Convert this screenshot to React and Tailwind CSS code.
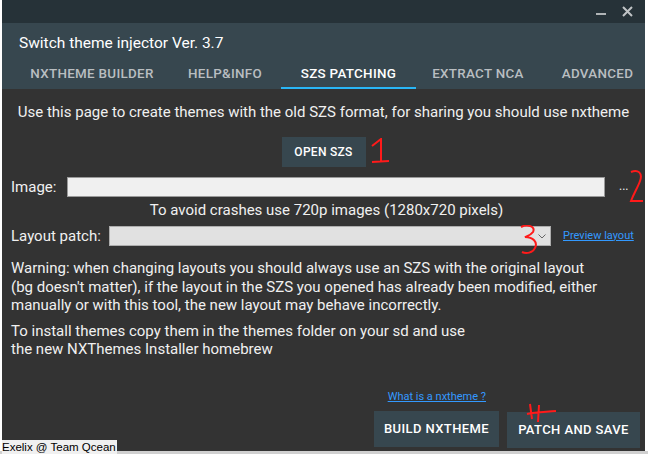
export default function App() {
  const f = { fontFamily: "Roboto, 'Liberation Sans', sans-serif" };
  return (
    <div className="w-[648px] h-[454px] bg-[#f0f0f0] flex flex-col overflow-hidden relative" style={f}>
      <div className="flex h-[451px]">
        <div className="w-[2px] bg-white" />
        <div className="w-[643px] flex flex-col bg-[#333333]">
          {/* title bar */}
          <div className="h-[23px] bg-[#263238] flex items-center justify-end pr-[12px] gap-[16px]">
            <div className="w-[10px] h-[2px] bg-[#b0b4b6] mt-[5px]" />
            <svg width="11" height="11" viewBox="0 0 11 11"><path d="M1 1L10 10M10 1L1 10" stroke="#c0c4c6" strokeWidth="2" /></svg>
          </div>
          {/* header */}
          <div className="h-[66px] bg-[#37474f] flex flex-col">
            <div className="h-[40px] flex items-center pl-[17px] text-white text-[15.5px] pt-[2px]">Switch theme injector Ver. 3.7</div>
            <div className="flex h-[26px] text-[13.4px] font-medium tracking-[0.3px] text-[#b9bec1]">
              <div className="w-[180px] flex justify-center pt-[1px]">NXTHEME BUILDER</div>
              <div className="w-[86px] flex justify-center pt-[1px]">HELP&amp;INFO</div>
              <div className="w-[13px]" />
              <div className="w-[135px] flex justify-center pt-[1px] text-white border-b-[2px] border-[#29b6f6]">SZS PATCHING</div>
              <div className="w-[124px] flex justify-center pt-[1px]">EXTRACT NCA</div>
              <div className="flex-1 flex justify-center pt-[1px] pl-[10px]">ADVANCED</div>
            </div>
          </div>
          {/* content */}
          <div className="flex-1 flex flex-col text-[#f0f0f0] text-[15px] relative">
            <div className="text-center mt-[14px] leading-[18px]">Use this page to create themes with the old SZS format, for sharing you should use nxtheme</div>
            <div className="flex justify-center mt-[16px]">
              <div className="relative">
                <div className="w-[84px] h-[30px] bg-[#37474f] flex items-center justify-center text-[12px] font-medium text-white tracking-[0.3px]">OPEN SZS</div>
                <svg className="absolute left-[86px] top-[1px]" width="24" height="26" viewBox="0 0 24 26"><path d="M4 8L13 1L13 23M4 24L21 23" stroke="#ff1a1a" strokeWidth="2" fill="none" /></svg>
              </div>
            </div>
            <div className="flex items-center mt-[10px] h-[20px] relative">
              <div className="w-[65px] pl-[9px]">Image:</div>
              <div className="w-[538px] h-[20px] bg-[#f0f0f0] border border-[#9a9a9a]" />
              <div className="ml-[14px] text-[12px] mt-[-2px]">...</div>
              <svg className="absolute left-[626px] top-[-8px]" width="16" height="36" viewBox="0 0 16 36"><path d="M3 3C10 0 15 4 12 12C10 18 6 24 3 32L15 32" stroke="#ff1a1a" strokeWidth="2" fill="none" /></svg>
            </div>
            <div className="text-center mt-[4px] leading-[18px] pl-[6px]">To avoid crashes use 720p images (1280x720 pixels)</div>
            <div className="flex items-center mt-[7px] h-[20px] relative">
              <div className="w-[107px] pl-[9px]">Layout patch:</div>
              <div className="w-[442px] h-[20px] bg-[#e1e1e1] border border-[#adadad] flex items-center justify-end pr-[4px]">
                <svg width="8" height="5" viewBox="0 0 8 5"><path d="M0.5 0.5L4 4L7.5 0.5" stroke="#666" strokeWidth="1" fill="none" /></svg>
              </div>
              <div className="ml-[12px] text-[11px] text-[#3399ff] underline">Preview layout</div>
              <svg className="absolute left-[517px] top-[-1px]" width="22" height="30" viewBox="0 0 22 30"><path d="M2 2C8 -1 17 1 14 7C12 10 8 11 6 12C14 12 19 17 16 23C14 28 7 29 3 27" stroke="#ff1a1a" strokeWidth="2" fill="none" /></svg>
            </div>
            <div className="mt-[13px] pl-[9px] leading-[18.5px]">
              <div>Warning: when changing layouts you should always use an SZS with the original layout</div>
              <div>(bg doesn't matter), if the layout in the SZS you opened has already been modified, either</div>
              <div>manually or with this tool, the new layout may behave incorrectly.</div>
            </div>
            <div className="mt-[7px] pl-[9px] leading-[18px]">
              <div>To install themes copy them in the themes folder on your sd and use</div>
              <div>the new NXThemes Installer homebrew</div>
            </div>
            <div className="flex-1" />
            <div className="flex justify-end pr-[159px] text-[11px] text-[#3399ff] underline leading-[13px]">What is a nxtheme ?</div>
            <div className="flex justify-end gap-[8px] pr-[5px] mt-[8px] mb-[3px] relative">
              <div className="w-[125px] h-[36px] bg-[#37474f] flex items-center justify-center text-[13px] font-medium text-white tracking-[0.4px]">BUILD NXTHEME</div>
              <div className="w-[133px] h-[36px] bg-[#37474f] flex items-center justify-center text-[13px] font-medium text-white tracking-[0.4px] mt-[1px]">PATCH AND SAVE</div>
              <svg className="absolute left-[524px] top-[-8px]" width="32" height="22" viewBox="0 0 32 22"><path d="M4 1L6 16M1 11C10 9 20 9 30 8M13 2L12 19" stroke="#ff1a1a" strokeWidth="2" fill="none" /></svg>
            </div>
          </div>
        </div>
        <div className="w-[3px] bg-white" />
      </div>
      <div className="h-[3px] bg-[#d0d0d0]" />
      <div className="absolute left-[2px] bottom-0 h-[14px] bg-[#f0f0f0] text-black leading-[14px] pr-[1px]" style={{ fontFamily: "'Liberation Sans', sans-serif", fontSize: "11.5px" }}>Exelix @ Team Qcean</div>
    </div>
  );
}
